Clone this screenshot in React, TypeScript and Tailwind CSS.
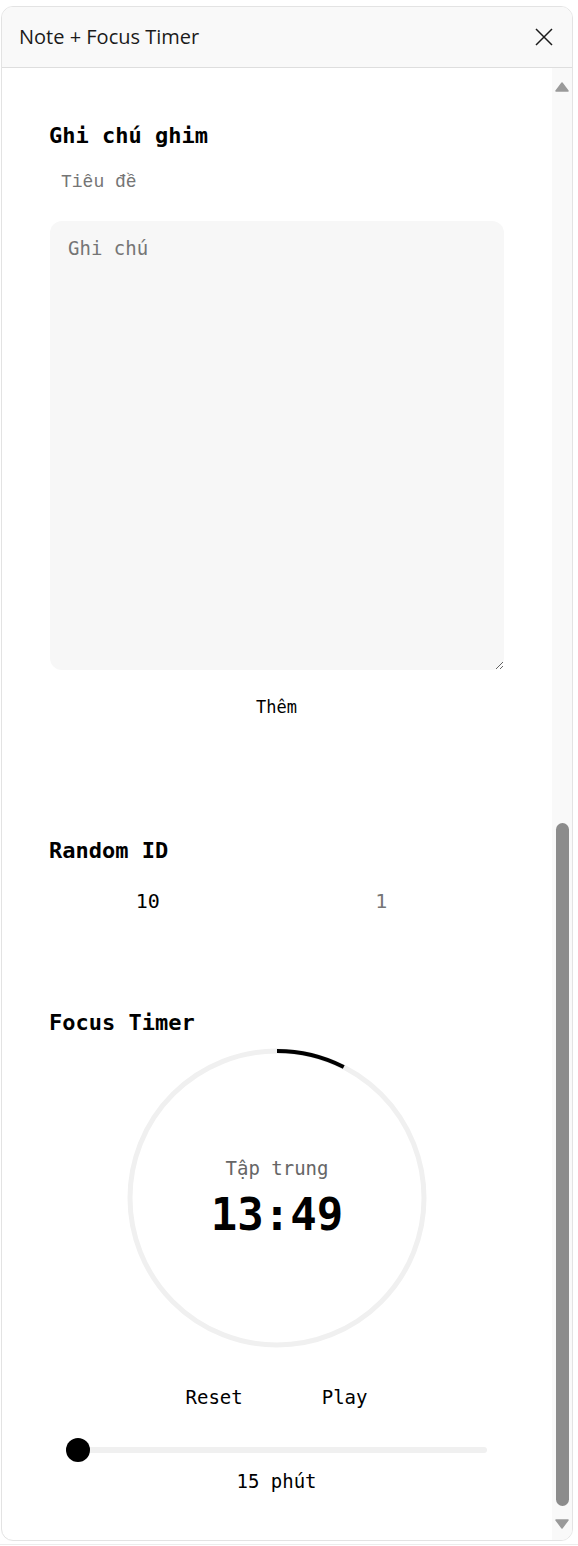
import React, { useState } from "react";

const mono = { fontFamily: '"DejaVu Sans Mono", "Liberation Mono", monospace' };

function Arrow({ down }: { down?: boolean }) {
  return (
    <svg width="14" height="10" viewBox="0 0 14 10" className="block mx-auto">
      <polygon
        points={down ? "1,1 13,1 7,9" : "1,9 13,9 7,1"}
        fill="#9a9a9a"
        stroke="#9a9a9a"
        strokeWidth="1.5"
        strokeLinejoin="round"
      />
    </svg>
  );
}

function TimerRing({ progress }: { progress: number }) {
  const r = 147;
  const c = 2 * Math.PI * r;
  return (
    <div className="relative w-[300px] h-[300px] mx-auto">
      <svg width="300" height="300" viewBox="0 0 300 300" className="block">
        <circle cx="150" cy="150" r={r} fill="none" stroke="#f0f0f0" strokeWidth="5" />
        <circle
          cx="150"
          cy="150"
          r={r}
          fill="none"
          stroke="#000"
          strokeWidth="4"
          strokeDasharray={`${c * progress} ${c}`}
          transform="rotate(-90 150 150)"
        />
      </svg>
      <div className="absolute inset-0 flex flex-col items-center justify-center">
        <div className="text-[19px] leading-[24px] text-[#666] mt-[2px]">Tập trung</div>
        <div className="text-[44px] leading-[54px] font-bold text-black mt-[8px]">13:49</div>
      </div>
    </div>
  );
}

export default function App() {
  const [title, setTitle] = useState("");
  const [note, setNote] = useState("");

  return (
    <div className="min-h-screen bg-white pt-[6px]">
      <div className="ml-[1px] w-[572px] rounded-[12px] border border-[#e3e3e3] overflow-hidden bg-white">
        {/* Header */}
        <div className="h-[61px] bg-[#f9f9f9] border-b border-[#dedede] flex items-center justify-between pl-[17px] pr-[19px]">
          <div
            className="text-[20px] text-[#1b1b1b]"
            style={{ fontFamily: '"Open Sans", "Noto Sans", sans-serif' }}
          >
            Note + Focus Timer
          </div>
          <svg width="18" height="18" viewBox="0 0 18 18" className="block">
            <path d="M1 1 17 17M17 1 1 17" stroke="#1b1b1b" strokeWidth="1.5" fill="none" />
          </svg>
        </div>

        <div className="flex">
          {/* Content */}
          <div className="flex-1 pl-[47px] pr-12 pt-[55px] pb-[46px] text-black" style={mono}>
            <h2 className="text-[22px] leading-[26px] font-bold">Ghi chú ghim</h2>
            <input
              value={title}
              onChange={(e) => setTitle(e.target.value)}
              placeholder={"Ti\u00EAu \u0111\u1EC1"}
              style={{ fontFamily: '"Liberation Mono", "DejaVu Sans Mono", monospace' }}
              className="mt-[15px] block w-full h-[36px] px-3 text-[18px] outline-none bg-transparent placeholder:text-[#757575]"
            />
            <textarea
              value={note}
              onChange={(e) => setNote(e.target.value)}
              placeholder={"Ghi ch\u00FA"}
              className="mt-[21px] ml-[1px] block w-[454px] h-[449px] rounded-[12px] bg-[#f7f7f7] px-[18px] pt-[14px] text-[19px] leading-[26px] outline-none placeholder:text-[#757575]"
            />
            <div className="mt-[23px] flex justify-center">
              <button className="h-[30px] px-3 text-[17px]">Thêm</button>
            </div>

            <h2 className="mt-[115px] text-[22px] leading-[26px] font-bold">Random ID</h2>
            <div className="mt-[22px] grid grid-cols-2 h-[30px] items-center text-[20px]">
              <div className="text-center pr-[30px]">10</div>
              <div className="text-center pr-[18px] text-[#757575]">1</div>
            </div>

            <h2 className="mt-[94px] text-[22px] leading-[26px] font-bold">Focus Timer</h2>
            <div className="mt-[12px] pl-[1px]">
              <TimerRing progress={0.075} />
            </div>

            <div className="mt-[34px] flex justify-center gap-[47px]">
              <button className="h-[30px] px-4 text-[19px]">Reset</button>
              <button className="h-[30px] px-4 text-[19px]">Play</button>
            </div>

            <div className="mt-[26px] px-[17px]">
              <div className="relative h-[24px] flex items-center">
                <div className="h-[6px] w-full rounded-full bg-[#f0f0f0]" />
                <div className="absolute left-0 top-0 w-[24px] h-[24px] rounded-full bg-black" />
              </div>
            </div>
            <div className="mt-[6px] text-center text-[19px] leading-[26px]">15 phút</div>
          </div>

          {/* Scrollbar */}
          <div className="w-[20px] bg-[#f9f9f9] flex flex-col pt-[14px] pb-[11px]">
            <Arrow />
            <div className="mt-auto mx-auto w-[13px] h-[683px] rounded-full bg-[#8c8c8c]" />
            <div className="mt-[13px]">
              <Arrow down />
            </div>
          </div>
        </div>
      </div>
      <div className="mt-[3px] border-t border-[#ececec]" />
    </div>
  );
}
